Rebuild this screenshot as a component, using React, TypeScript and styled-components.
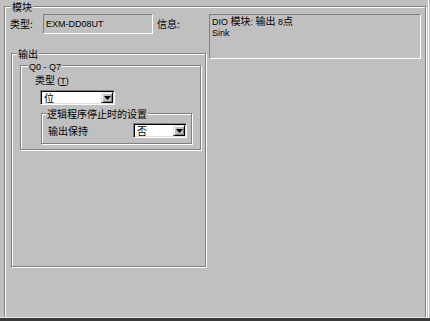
import React from "react";
import styled, { createGlobalStyle } from "styled-components";

const Global = createGlobalStyle`
  html, body { margin: 0; padding: 0; background: #c0c0c0; }
  body {
    font-family: "Noto Sans CJK SC", "Liberation Sans", sans-serif;
    font-size: 10px;
    color: #000;
  }
  * { box-sizing: border-box; }
`;

const Window = styled.div`
  width: 430px;
  height: 321px;
  background: #c0c0c0;
  border-bottom: 3px solid #3a3a3a;
  box-shadow: inset -1px 0 0 #c0c0c0, inset -2px 0 0 #ffffff, inset 0 -1px 0 #e4e4e4;
`;

const Viewport = styled.div`
  height: 317px;
  overflow: hidden;
  padding: 6px 0 0 4px;
`;

const Group = styled.div<{ $w: number; $h: number }>`
  position: relative;
  width: ${(p) => p.$w}px;
  height: ${(p) => p.$h}px;
  border: 1px solid #808080;
  box-shadow: inset 1px 1px 0 #ffffff, 1px 1px 0 #ffffff;
`;

const Title = styled.span<{ $left: number }>`
  position: absolute;
  top: -6px;
  left: ${(p) => p.$left}px;
  padding: 0 1px;
  background: #c0c0c0;
  line-height: 12px;
  white-space: nowrap;
`;

const Lat = styled.span`
  font-family: "Liberation Sans", sans-serif;
  font-size: 9px;
`;

const ModuleBody = styled.div`
  display: grid;
  grid-template-columns: 197px 212px;
  column-gap: 2px;
  align-items: start;
  padding: 7px 0 0 5px;
`;

const LeftCol = styled.div`
  display: flex;
  flex-direction: column;
`;

const TopRow = styled.div`
  display: flex;
  align-items: center;
  height: 20px;
`;

const FieldLabel = styled.span<{ $w?: number; $ml?: number }>`
  width: ${(p) => (p.$w ? `${p.$w}px` : "auto")};
  margin-left: ${(p) => p.$ml ?? 0}px;
  line-height: 12px;
  white-space: nowrap;
`;

const ReadOnlyBox = styled.div`
  width: 110px;
  height: 20px;
  display: flex;
  align-items: center;
  padding-left: 2px;
  border: 1px solid;
  border-color: #808080 #ffffff #ffffff #808080;
`;

const InfoBox = styled.div`
  width: 212px;
  height: 45px;
  padding: 1px 2px;
  line-height: 10px;
  border: 1px solid;
  border-color: #808080 #ffffff #ffffff #808080;
`;

const OutputGroup = styled(Group)`
  margin: 19px 0 0 1px;
  padding: 11px 0 0 8px;
`;

const RangeGroup = styled(Group)`
  padding: 8px 0 0 0;
  display: flex;
  flex-direction: column;
  align-items: flex-start;
`;

const TypeLabel = styled.span`
  margin-left: 14px;
  line-height: 12px;
  u { text-decoration: underline; }
`;

const Select = styled.div<{ $w: number; $mt?: number; $ml?: number }>`
  display: flex;
  width: ${(p) => p.$w}px;
  height: 15px;
  margin: ${(p) => p.$mt ?? 0}px 0 0 ${(p) => p.$ml ?? 0}px;
  padding: 1px;
  background: #ffffff;
  border: 1px solid;
  border-color: #808080 #ffffff #ffffff #808080;
  box-shadow: inset 1px 1px 0 #000000, inset -1px -1px 0 #dfdfdf;
`;

const SelectValue = styled.span`
  flex: 1;
  padding-left: 2px;
  line-height: 11px;
  white-space: nowrap;
`;

const ArrowButton = styled.span`
  width: 12px;
  height: 11px;
  display: flex;
  align-items: center;
  justify-content: center;
  background: #c0c0c0;
  border: 1px solid;
  border-color: #dfdfdf #000000 #000000 #dfdfdf;
  box-shadow: inset 1px 1px 0 #ffffff, inset -1px -1px 0 #808080;
`;

const StopGroup = styled(Group)`
  margin: 8px 0 0 20px;
`;

const StopRow = styled.div`
  display: flex;
  align-items: center;
  padding: 9px 0 0 6px;
`;

const Arrow = () => (
  <svg width="7" height="4" viewBox="0 0 7 4">
    <polygon points="0,0 7,0 3.5,4" fill="#000" />
  </svg>
);

const Dropdown = ({ value, w, mt, ml }: { value: string; w: number; mt?: number; ml?: number }) => (
  <Select $w={w} $mt={mt} $ml={ml}>
    <SelectValue>{value}</SelectValue>
    <ArrowButton>
      <Arrow />
    </ArrowButton>
  </Select>
);

export default function App() {
  return (
    <>
      <Global />
      <Window>
        <Viewport>
          <Group $w={422} $h={330}>
            <Title $left={6}>模块</Title>
            <ModuleBody>
              <LeftCol>
                <TopRow>
                  <FieldLabel $w={33}>类型:</FieldLabel>
                  <ReadOnlyBox>
                    <Lat>EXM-DD08UT</Lat>
                  </ReadOnlyBox>
                  <FieldLabel $ml={4}>信息:</FieldLabel>
                </TopRow>
                <OutputGroup $w={195} $h={214}>
                  <Title $left={5}>输出</Title>
                  <RangeGroup $w={181} $h={85}>
                    <Title $left={7}>
                      <Lat>Q0 - Q7</Lat>
                    </Title>
                    <TypeLabel>
                      类型 <Lat>(<u>T</u>)</Lat>
                    </TypeLabel>
                    <Dropdown value="位" w={75} mt={3} ml={19} />
                    <StopGroup $w={151} $h={31}>
                      <Title $left={4}>逻辑程序停止时的设置</Title>
                      <StopRow>
                        <FieldLabel $w={85}>输出保持</FieldLabel>
                        <Dropdown value="否" w={54} />
                      </StopRow>
                    </StopGroup>
                  </RangeGroup>
                </OutputGroup>
              </LeftCol>
              <InfoBox>
                <div>
                  <Lat>DIO </Lat>模块<Lat>: </Lat>输出<Lat> 8</Lat>点
                </div>
                <div>
                  <Lat>Sink</Lat>
                </div>
              </InfoBox>
            </ModuleBody>
          </Group>
        </Viewport>
      </Window>
    </>
  );
}
